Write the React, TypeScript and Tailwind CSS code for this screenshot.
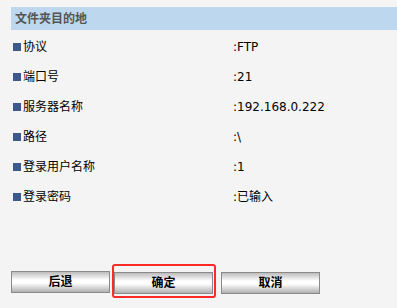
const rows: [string, string][] = [
  ["协议", ":FTP"],
  ["端口号", ":21"],
  ["服务器名称", ":192.168.0.222"],
  ["路径", ":\\"],
  ["登录用户名称", ":1"],
  ["登录密码", ":已输入"],
];

function Btn({ label }: { label: string }) {
  return (
    <button className="h-[22px] w-[99px] border border-[#8a8a8a] bg-[linear-gradient(#bdbdbd,#ffffff_40%,#ffffff_55%,#b0b0b0)] text-[12px] font-bold text-black leading-none">
      {label}
    </button>
  );
}

export default function App() {
  return (
    <div
      className="h-[308px] w-[397px] overflow-hidden bg-[#f4f4f4] pl-[11px] pt-[7px]"
      style={{ fontFamily: '"DejaVu Sans", "Noto Sans CJK SC", sans-serif' }}
    >
      {/* Header */}
      <div className="flex h-[23px] items-center bg-[#bdd7ee] pl-[4px] text-[12px] font-bold text-[#555]">
        文件夹目的地
      </div>

      {/* Settings list */}
      <div className="mt-[2px]">
        {rows.map(([k, v]) => (
          <div key={k} className="flex h-[30px] items-center text-[12px] text-black">
            <div className="flex w-[222px] items-center">
              <span className="ml-[2px] mr-[2px] inline-block h-[8px] w-[8px] bg-[#3b5a8b]" />
              <span>{k}</span>
            </div>
            <span>{v}</span>
          </div>
        ))}
      </div>

      {/* Buttons */}
      <div className="mt-[58px] flex items-center">
        <Btn label="后退" />
        <div className="relative ml-[4px]">
          <Btn label="确定" />
          <div className="pointer-events-none absolute left-[-2px] top-[-6px] h-[34px] w-[104px] rounded-[3px] border-[2px] border-[#ff2a2a]" />
        </div>
        <div className="ml-[8px]">
          <Btn label="取消" />
        </div>
      </div>
    </div>
  );
}
